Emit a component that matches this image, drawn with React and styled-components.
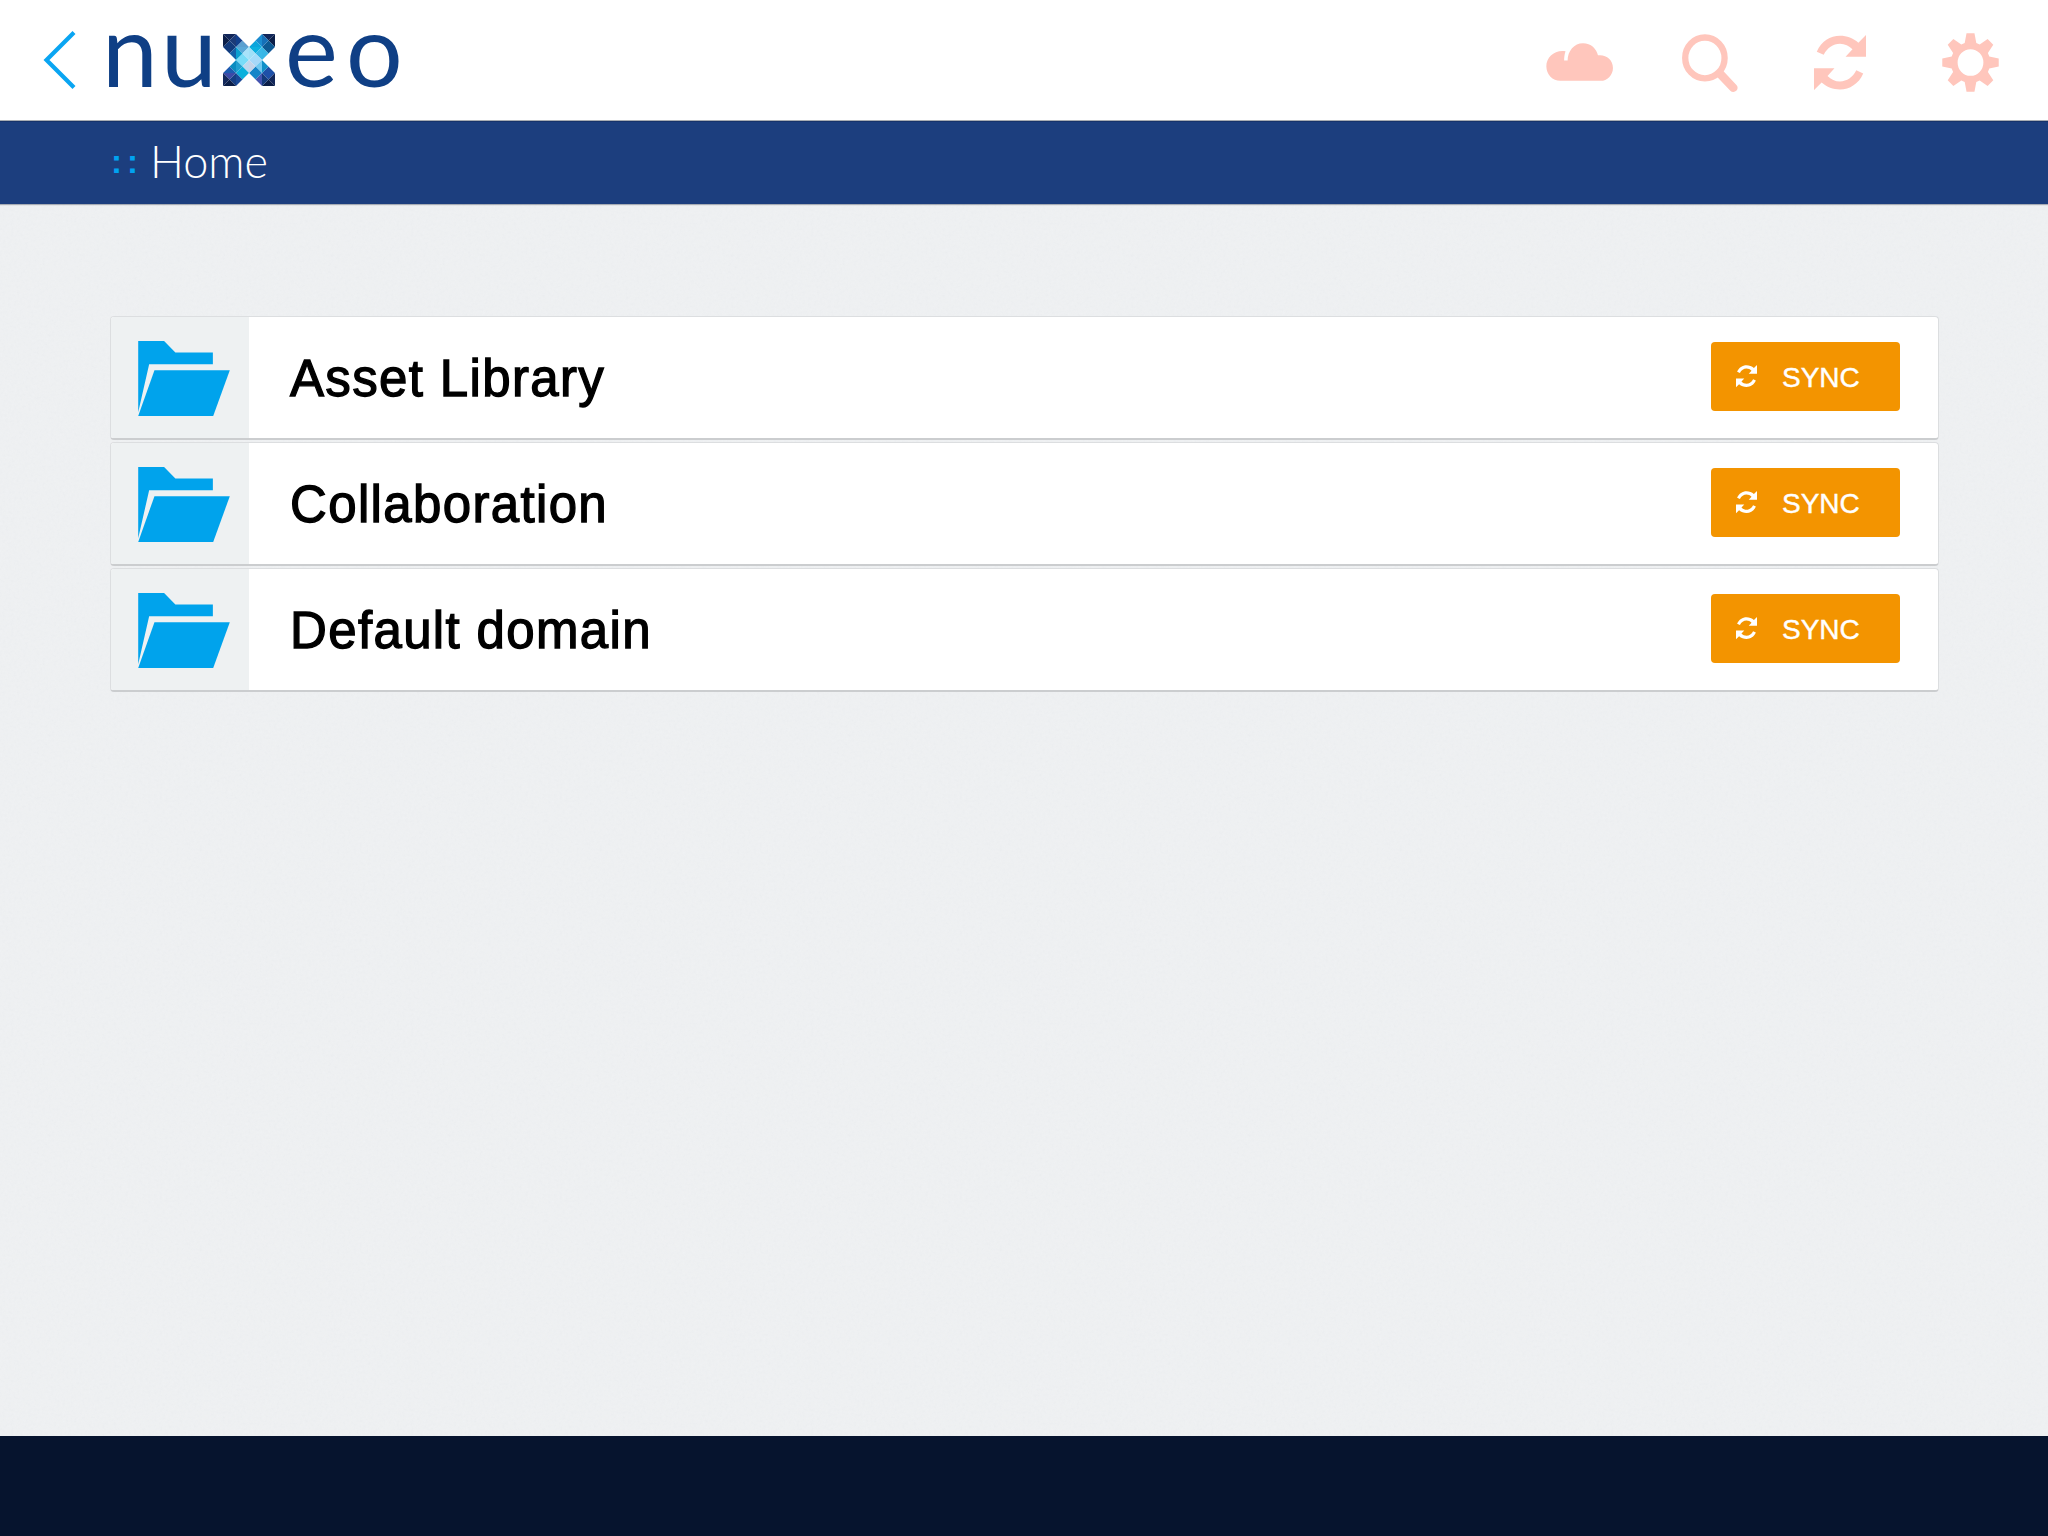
import React from 'react'
import styled, { createGlobalStyle } from 'styled-components'

const noise = `url("data:image/svg+xml,%3Csvg xmlns='http://www.w3.org/2000/svg' width='400' height='400'%3E%3Cfilter id='n'%3E%3CfeTurbulence type='fractalNoise' baseFrequency='0.35' numOctaves='3'/%3E%3CfeColorMatrix values='0 0 0 0 0.5 0 0 0 0 0.5 0 0 0 0 0.5 0 0 0 0.09 0'/%3E%3C/filter%3E%3Crect width='400' height='400' filter='url(%23n)'/%3E%3C/svg%3E")`

const GlobalStyle = createGlobalStyle`
  html, body {
    margin: 0;
    padding: 0;
    background: #f0f2f4;
  }
  * {
    box-sizing: border-box;
  }
`

const spaces = ['Asset Library', 'Collaboration', 'Default domain']

// [top, right, bottom, left] per cell of the 4x4 logo grid
const logoCells = [
  [['#12275a', '#1b3a78', '#123a7c', '#0b1e48'], ['#3c4aa8', '#3f55b0', '#5a9fd0', '#123f8c'], ['#0a7cc4', '#1a8cd0', '#0ca5dc', '#5a9fd0'], ['#12275a', '#0b1e48', '#0d5a94', '#1570b8']],
  [['#123a7c', '#1360a8', '#0a94cc', '#0f4c9c'], ['#5aa8d8', '#a8e2fa', '#78dcf8', '#0aa0d0'], ['#0cb0e0', '#38b8e8', '#a4dcfa', '#9fe0f8'], ['#0d5a94', '#1d56a8', '#0a8cc4', '#36b6e6']],
  [['#0a94cc', '#0a8cc0', '#1c5cb0', '#4050b0'], ['#78dcf8', '#bcd8ee', '#0ab0dc', '#20a0d0'], ['#a8d8f8', '#70c8f0', '#1484c8', '#c4d4ea'], ['#0a8cc4', '#1260a8', '#1e50a8', '#1090c8']],
  [['#3c4aa8', '#163f84', '#0b1e48', '#12275a'], ['#0ab0dc', '#5aa0cc', '#143c88', '#1a4a98'], ['#1484c8', '#4454b0', '#3c4aa8', '#5a9fd0'], ['#1e50a8', '#12275a', '#0b1e48', '#123a7c']],
]

const LogoMark = () => (
  <svg width="52" height="52" viewBox="0 0 52 52">
    <clipPath id="logo-x">
      <polygon points="0,0 13,0 26,13 39,0 52,0 52,13 39,26 52,39 52,52 39,52 26,39 13,52 0,52 0,39 13,26 0,13" />
    </clipPath>
    <g clipPath="url(#logo-x)">
      {logoCells.map((row, r) =>
        row.map((cell, c) => {
          const x = c * 13
          const y = r * 13
          const mid = `${x + 6.5},${y + 6.5}`
          const a = `${x},${y}`
          const b = `${x + 13},${y}`
          const d = `${x + 13},${y + 13}`
          const e = `${x},${y + 13}`
          return (
            <g key={`${r}-${c}`}>
              <polygon points={`${a} ${b} ${mid}`} fill={cell[0]} />
              <polygon points={`${b} ${d} ${mid}`} fill={cell[1]} />
              <polygon points={`${d} ${e} ${mid}`} fill={cell[2]} />
              <polygon points={`${e} ${a} ${mid}`} fill={cell[3]} />
            </g>
          )
        })
      )}
    </g>
  </svg>
)

const BackIcon = () => (
  <svg width="36" height="60" viewBox="0 0 36 60">
    <path d="M32 2.5 L4.5 30 L32 57.5" fill="none" stroke="#0aa5f2" strokeWidth="4.2" />
  </svg>
)

const CloudIcon = () => (
  <svg width="68" height="39" viewBox="131 126 195 111" fill="#ffc6bc">
    <path d="M172 234 C150 234 132 216 132 192 C132 166 156 144 187 149 C184 158 183 167 183 176 L193 176 C193 148 212 126 237 126 C260 126 276 142 280 161 L286 161 C306 161 323 176 323 197 C323 218 306 234 288 234 Z" />
  </svg>
)

const SearchIcon = () => (
  <svg width="56" height="58" viewBox="522 97 159 165">
    <ellipse cx="587" cy="165" rx="56" ry="58" fill="none" stroke="#ffc6bc" strokeWidth="18" />
    <path d="M630 210 L668 250" fill="none" stroke="#ffc6bc" strokeWidth="24" strokeLinecap="round" />
  </svg>
)

const RefreshIcon = ({ size = 52, color = '#ffc6bc' }) => (
  <svg width={size} height={size * 1.06} viewBox="897 100 150 159" fill={color}>
    <path d="M905 148 C918 118 944 102 972 102 C992 102 1010 109 1025 122 L1047 100 L1047 163 L988 163 L1008 141 C998 131 986 125 972 125 C952 125 935 137 925 157 Z" />
    <path d="M1039 211 C1026 241 1000 257 972 257 C952 257 934 250 919 237 L897 259 L897 196 L956 196 L936 218 C946 228 958 234 972 234 C992 234 1009 222 1019 202 Z" />
  </svg>
)

const gearPath = () => {
  const cx = 84
  const cy = 84
  const pts = []
  for (let i = 0; i < 8; i++) {
    const angle = (i * Math.PI) / 4 - Math.PI / 2
    const at = (r, off) => {
      const a = angle + off
      return `${(cx + r * Math.cos(a)).toFixed(1)} ${(cy + r * Math.sin(a)).toFixed(1)}`
    }
    pts.push(at(58, -0.3), at(84, -0.14), at(84, 0.14), at(58, 0.3))
  }
  return `M${pts.join(' L')} Z M122 84 A38 38 0 1 0 46 84 A38 38 0 1 0 122 84 Z`
}

const GearIcon = () => (
  <svg width="57" height="59" viewBox="0 0 168 168" preserveAspectRatio="none">
    <path d={gearPath()} fill="#ffc6bc" fillRule="evenodd" />
  </svg>
)

const FolderIcon = () => (
  <svg width="92" height="75" viewBox="114 123 276 226" fill="#00a3ec">
    <polygon points="114,123 192,123 226,158 339,158 339,193 147,193 114,338" />
    <polygon points="163,211 390,211 340,349 114,349" />
  </svg>
)

const App = () => (
  <Page>
    <GlobalStyle />
    <Header>
      <Brand>
        <BackIcon />
        <Wordmark>
          <Letter $width={59}>n</Letter>
          <Letter $width={62}>u</Letter>
          <LogoMark />
          <Letter $width={61} $left={10}>e</Letter>
          <Letter $width={60}>o</Letter>
        </Wordmark>
      </Brand>
      <Actions>
        <IconSlot><CloudIcon /></IconSlot>
        <IconSlot><SearchIcon /></IconSlot>
        <IconSlot><RefreshIcon /></IconSlot>
        <IconSlot><GearIcon /></IconSlot>
      </Actions>
    </Header>
    <Breadcrumb>
      <Separator>::</Separator>
      <Crumb>Home</Crumb>
    </Breadcrumb>
    <Main>
      <List>
        {spaces.map((name) => (
          <Row key={name}>
            <IconCell><FolderIcon /></IconCell>
            <RowBody>
              <Title>{name}</Title>
              <SyncButton>
                <RefreshIcon size={21} color="#fff" />
                <SyncLabel>SYNC</SyncLabel>
              </SyncButton>
            </RowBody>
          </Row>
        ))}
      </List>
    </Main>
    <Footer />
  </Page>
)

export default App

const Page = styled.div`
  width: 2048px;
  height: 1536px;
  display: flex;
  flex-direction: column;
  overflow: hidden;
  background-color: #f0f2f4;
  background-image: ${noise};
  font-family: "Liberation Sans", Arial, sans-serif;
`

const Header = styled.header`
  height: 121px;
  flex: none;
  display: flex;
  align-items: center;
  justify-content: space-between;
  padding: 0 13px 1px 42px;
  background: #fff;
  border-bottom: 1px solid #a9adb3;
`

const Brand = styled.div`
  display: flex;
  align-items: center;
  gap: 24px;
`

const Wordmark = styled.div`
  display: flex;
  align-items: center;
  height: 60px;
`

const Letter = styled.span`
  width: ${(p) => p.$width}px;
  margin-left: ${(p) => p.$left || 0}px;
  padding-bottom: 24px;
  font-family: Lato, sans-serif;
  font-weight: 400;
  font-size: 100px;
  line-height: 100px;
  color: #0f3f85;
`

const Actions = styled.div`
  display: flex;
  padding-top: 6px;
`

const IconSlot = styled.div`
  width: 130px;
  display: flex;
  align-items: center;
  justify-content: center;
`

const Breadcrumb = styled.nav`
  height: 83px;
  flex: none;
  display: flex;
  align-items: center;
  gap: 7px;
  padding: 0 0 4px 111px;
  background: #1c3e7e;
  box-shadow: inset 0 1px 0 #17336a, 0 1px 1px rgba(60, 70, 90, 0.4);
`

const Separator = styled.span`
  margin-top: 2px;
  font-size: 33px;
  font-weight: 700;
  line-height: 1;
  letter-spacing: 5px;
  color: #00a3f0;
`

const Crumb = styled.span`
  font-family: Lato, sans-serif;
  font-weight: 300;
  font-size: 45px;
  color: #fff;
`

const Main = styled.main`
  flex: 1;
  padding: 112px 109px 0 110px;
`

const List = styled.div`
  display: flex;
  flex-direction: column;
  gap: 2px;
`

const Row = styled.div`
  height: 124px;
  display: flex;
  overflow: hidden;
  background: #fff;
  border: 1px solid #dcdee0;
  border-bottom: 2px solid #cbcdcf;
  border-radius: 4px;
`

const IconCell = styled.div`
  width: 138px;
  flex: none;
  display: flex;
  align-items: center;
  padding: 2px 0 0 27px;
  background: #eef1f2;
`

const RowBody = styled.div`
  flex: 1;
  display: flex;
  align-items: center;
  justify-content: space-between;
  padding: 0 38px 0 41px;
`

const Title = styled.span`
  padding-top: 2px;
  font-size: 51px;
  letter-spacing: 1.35px;
  color: #000;
  -webkit-text-stroke: 1.3px #000;
`

const SyncButton = styled.button`
  width: 189px;
  height: 69px;
  margin-bottom: 2px;
  display: flex;
  align-items: center;
  gap: 25px;
  padding: 0 0 0 25px;
  border: none;
  border-radius: 4px;
  background: #f39400;
  color: #fff;
  font-family: inherit;
  font-size: 28px;
`

const SyncLabel = styled.span`
  padding-top: 2px;
  -webkit-text-stroke: 0.4px #fff;
`

const Footer = styled.footer`
  height: 100px;
  flex: none;
  background: #06142e;
`
